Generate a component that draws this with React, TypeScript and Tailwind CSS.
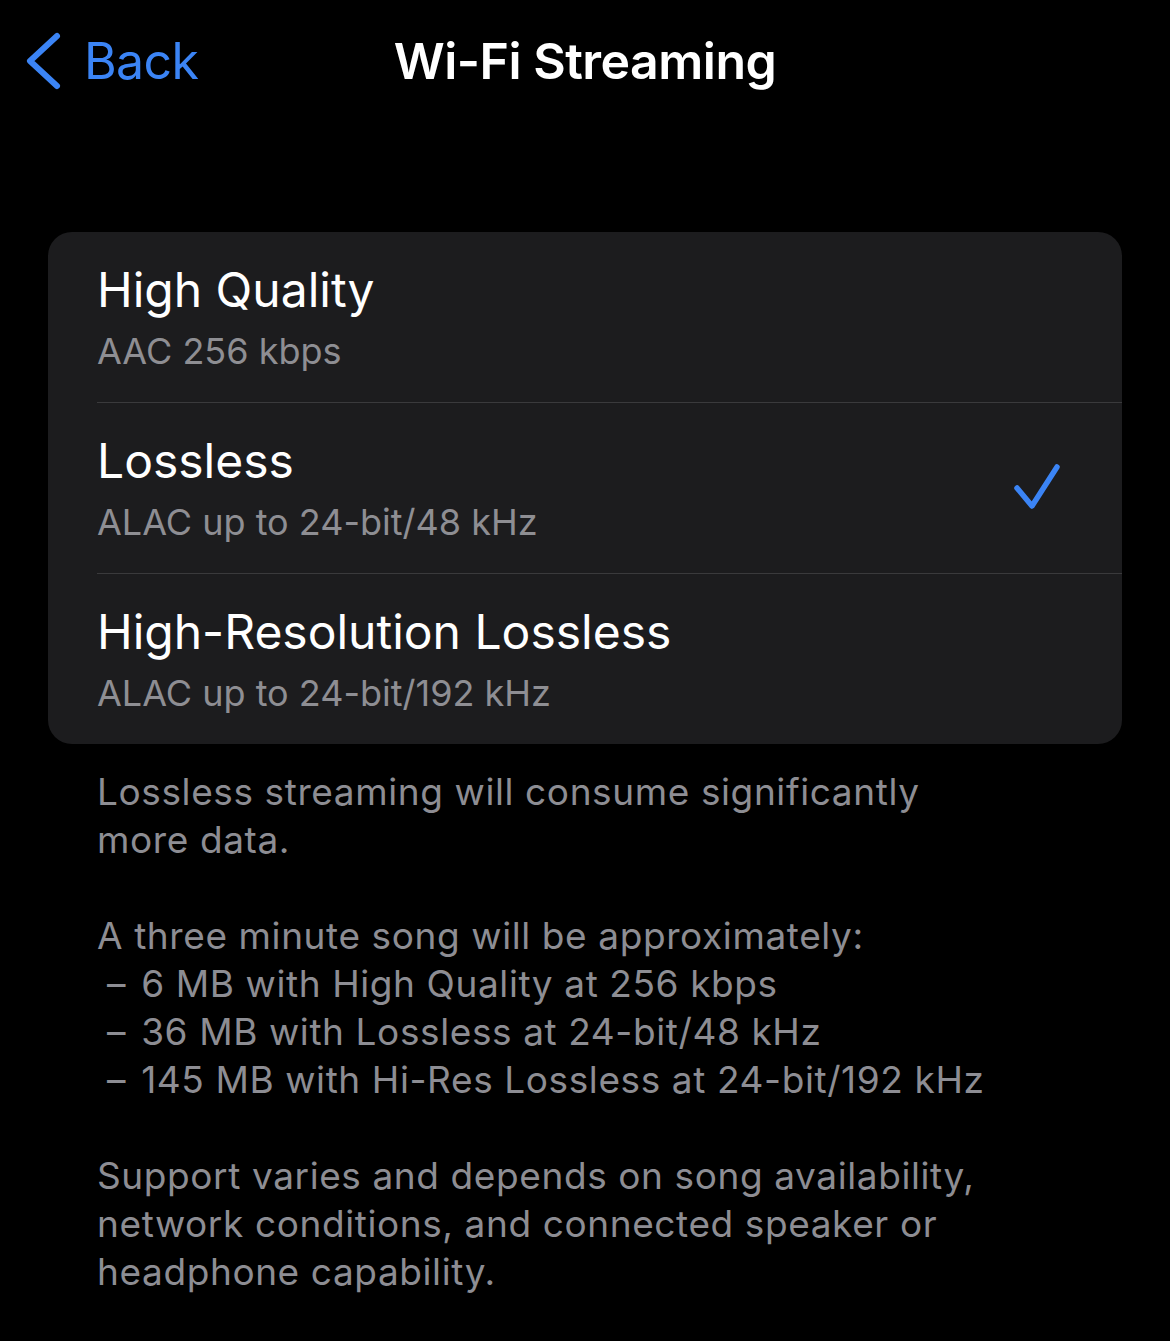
import { ReactNode } from 'react'

const font = { fontFamily: 'Inter, "Noto Sans", sans-serif' }

const options = [
  { title: 'High Quality', detail: 'AAC 256 kbps', checked: false },
  { title: 'Lossless', detail: 'ALAC up to 24-bit/48 kHz', checked: true },
  { title: 'High-Resolution Lossless', detail: 'ALAC up to 24-bit/192 kHz', checked: false },
]

function Line({ children }: { children: ReactNode }) {
  return <div>{children}</div>
}

function Item({ children }: { children: ReactNode }) {
  return (
    <div className="pl-[10px]">
      <span className="mr-[4px]">–</span> {children}
    </div>
  )
}

export default function App() {
  return (
    <div className="min-h-[1341px] w-full bg-black text-white antialiased" style={font}>
      <header className="grid h-[122px] grid-cols-[1fr_auto_1fr] items-center">
        <div className="flex items-center gap-[20px] pl-[24px] text-[#3b84f5]">
          <svg width="40" height="60" viewBox="0 0 40 60" fill="none">
            <path d="M33 5 L6 30 L33 55" stroke="currentColor" strokeWidth="6" strokeLinecap="round" strokeLinejoin="round" />
          </svg>
          <span className="text-[50px] leading-none tracking-[-0.6px]">Back</span>
        </div>
        <h1 className="text-[50px] font-semibold leading-none tracking-[-0.5px]">Wi-Fi Streaming</h1>
        <div />
      </header>

      <div className="mx-[48px] mt-[110px] overflow-hidden rounded-[24px] bg-[#1c1c1e]">
        {options.map((o, i) => (
          <div key={o.title} className="pl-[49px]">
            <div
              className={
                'flex items-center pr-[60px] ' +
                (i < options.length - 1 ? 'h-[171px] border-b border-[#3a3a3c]' : 'h-[170px]')
              }
            >
              <div className="flex-1">
                <div className="text-[48px] leading-[58px] tracking-[0px]">{o.title}</div>
                <div className="mt-[10px] text-[36px] leading-[44px] tracking-[0px] text-[#8e8e93]">{o.detail}</div>
              </div>
              {o.checked && (
                <svg width="52" height="52" viewBox="0 0 52 52" fill="none" className="text-[#3b84f5] translate-x-[2px]">
                  <path d="M5 26 L20 44 L45 5" stroke="currentColor" strokeWidth="5.5" strokeLinecap="round" strokeLinejoin="round" />
                </svg>
              )}
            </div>
          </div>
        ))}
      </div>

      <div className="px-[97px] pt-[24px] pb-[40px] text-[37px] leading-[48px] tracking-[0.6px] text-[#8d8d93]">
        <Line>Lossless streaming will consume significantly</Line>
        <Line>more data.</Line>
        <div className="h-[48px]" />
        <Line>A three minute song will be approximately:</Line>
        <Item>6 MB with High Quality at 256 kbps</Item>
        <Item>36 MB with Lossless at 24-bit/48 kHz</Item>
        <Item>145 MB with Hi-Res Lossless at 24-bit/192 kHz</Item>
        <div className="h-[48px]" />
        <Line>Support varies and depends on song availability,</Line>
        <Line>network conditions, and connected speaker or</Line>
        <Line>headphone capability.</Line>
      </div>
    </div>
  )
}
